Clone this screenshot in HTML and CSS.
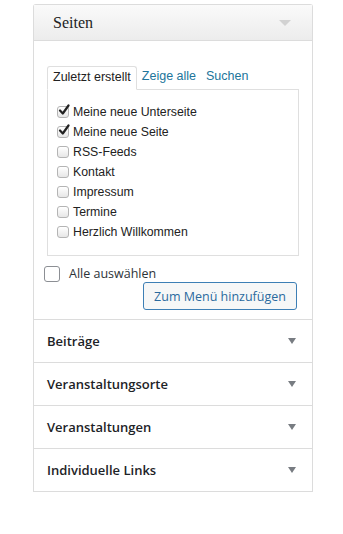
FILE: index.html
```html
<!DOCTYPE html>
<html>
<head>
  <meta name="viewport" content="width=device-width, initial-scale=1.0">
  <title>Menüs</title>
  <link rel="stylesheet" href="styles.css">
</head>

<body>
  <div class="accordion">
    <div class="section open">
      <div class="section-head">
        <h3>Seiten</h3>
        <span class="arrow-light"></span>
      </div>
      <div class="section-body">
        <ul class="tabs">
          <li class="tab active">Zuletzt erstellt</li>
          <li class="tab"><a href="#">Zeige alle</a></li>
          <li class="tab"><a href="#">Suchen</a></li>
        </ul>
        <div class="tab-panel">
          <label class="item"><span class="mac-box checked"><svg viewBox="0 0 12 12" width="12" height="12"><path d="M2 6.5 L4.8 9.5 L10.5 1.5" fill="none" stroke="#222" stroke-width="2.2" stroke-linecap="round" stroke-linejoin="round"/></svg></span>Meine neue Unterseite</label>
          <label class="item"><span class="mac-box checked"><svg viewBox="0 0 12 12" width="12" height="12"><path d="M2 6.5 L4.8 9.5 L10.5 1.5" fill="none" stroke="#222" stroke-width="2.2" stroke-linecap="round" stroke-linejoin="round"/></svg></span>Meine neue Seite</label>
          <label class="item"><span class="mac-box"></span>RSS-Feeds</label>
          <label class="item"><span class="mac-box"></span>Kontakt</label>
          <label class="item"><span class="mac-box"></span>Impressum</label>
          <label class="item"><span class="mac-box"></span>Termine</label>
          <label class="item"><span class="mac-box"></span>Herzlich Willkommen</label>
        </div>
        <label class="select-all"><span class="win-box"></span>Alle auswählen</label>
        <div class="actions">
          <button class="add-button" type="button">Zum Menü hinzufügen</button>
        </div>
      </div>
    </div>

    <div class="closed-list">
      <div class="closed">Beiträge <span class="arrow-dark"></span></div>
      <div class="closed">Veranstaltungsorte <span class="arrow-dark"></span></div>
      <div class="closed">Veranstaltungen <span class="arrow-dark"></span></div>
      <div class="closed">Individuelle Links <span class="arrow-dark"></span></div>
    </div>
  </div>
</body>
</html>
```

FILE: styles.css
```css
body {
  margin: 0;
  padding: 0;
  background-color: #fff;
  font-family: "Liberation Sans", Arial, sans-serif;
}

.accordion {
  width: 280px;
  margin: 4px 0 0 33px;
}

.section {
  border: 1px solid #dcdcdc;
  border-bottom: none;
  border-radius: 3px 3px 0 0;
}

.section-head {
  display: flex;
  align-items: center;
  justify-content: space-between;
  height: 35px;
  padding: 0 21px 0 19px;
  background: linear-gradient(#fafafa, #ececec);
  border-bottom: 1px solid #dcdcdc;
}

.section-head h3 {
  margin: 0;
  font-family: "Liberation Serif", "DejaVu Serif", serif;
  font-size: 16px;
  font-weight: normal;
  color: #222;
}

.arrow-light {
  width: 0;
  height: 0;
  border-left: 6px solid transparent;
  border-right: 6px solid transparent;
  border-top: 6px solid #d2d2d2;
}

.section-body {
  padding: 25px 13px 9px 12px;
  background-color: #fff;
}

.tabs {
  display: flex;
  list-style: none;
  margin: 0;
  padding: 0 0 0 1px;
  font-size: 12.5px;
}

.tab {
  padding: 4px 5px 5px 5px;
  line-height: 13px;
}

.tab a {
  color: #21759b;
  text-decoration: none;
}

.tab.active {
  color: #222;
  border: 1px solid #dfdfdf;
  border-bottom-color: #fff;
  margin-bottom: -1px;
  padding-bottom: 5px;
  border-radius: 3px 3px 0 0;
  background-color: #fff;
}

.tab-panel {
  border: 1px solid #dfdfdf;
  margin-left: 1px;
  padding: 12px 10px 13px 9px;
  background-color: #fff;
}

.item {
  display: flex;
  align-items: center;
  height: 20px;
  font-size: 12.3px;
  color: #222;
}

.mac-box {
  position: relative;
  width: 10px;
  height: 10px;
  margin-right: 4px;
  border: 1px solid #b4b4b4;
  border-radius: 3px;
  background: linear-gradient(#fff, #e6e6e6);
  flex: none;
}

.mac-box svg {
  position: absolute;
  left: 0;
  top: -3px;
}

.select-all {
  display: flex;
  align-items: center;
  margin: 9px 0 0 -2px;
  font-family: "Open Sans", sans-serif;
  font-size: 12.5px;
  color: #2c3338;
}

.win-box {
  width: 14px;
  height: 14px;
  border: 1px solid #8c8f94;
  border-radius: 3px;
  margin-right: 9px;
  background-color: #fff;
}

.actions {
  display: flex;
  justify-content: flex-end;
}

.add-button {
  width: 154px;
  height: 28px;
  margin-right: 2px;
  padding: 0;
  font-family: "Open Sans", sans-serif;
  font-size: 12.5px;
  color: #2a6a9e;
  background-color: #f6f7f7;
  border: 1px solid #3d7fb5;
  border-radius: 3px;
  cursor: pointer;
}

.closed-list {
  border: 1px solid #dcdcdc;
}

.closed {
  display: flex;
  align-items: center;
  justify-content: space-between;
  height: 42px;
  padding: 0 16px 0 13px;
  border-top: 1px solid #dcdcdc;
  font-family: "Open Sans", sans-serif;
  font-size: 13px;
  font-weight: 600;
  color: #1d2327;
}

.closed:first-child {
  border-top: none;
}

.arrow-dark {
  width: 0;
  height: 0;
  border-left: 4px solid transparent;
  border-right: 4px solid transparent;
  border-top: 6px solid #787c82;
}
```
